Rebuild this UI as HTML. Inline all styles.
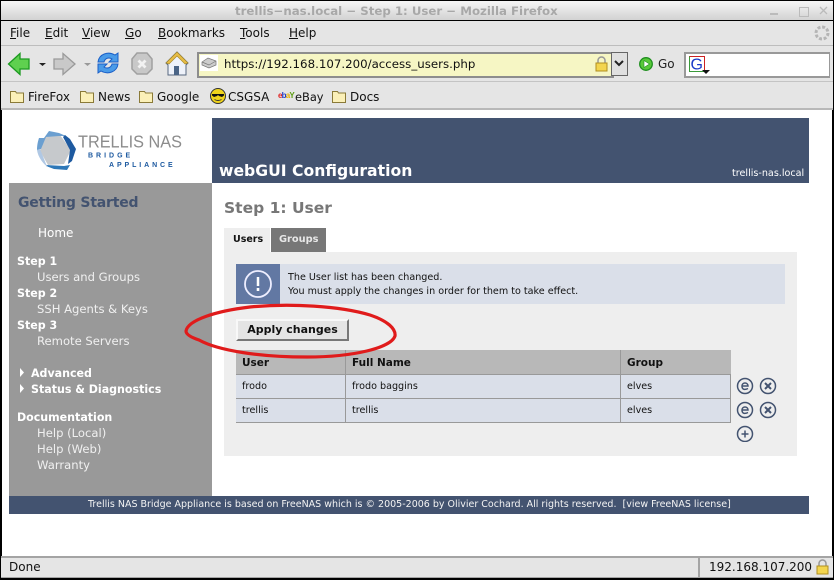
<!DOCTYPE html>
<html><head><meta charset="utf-8"><style>
html,body{margin:0;padding:0;background:#000}
#w{position:relative;width:834px;height:580px;overflow:hidden;background:#e5e5e5;font-family:"DejaVu Sans",sans-serif;color:#000}
.a{position:absolute;white-space:nowrap}
.t{position:absolute;white-space:nowrap;font-size:12px;line-height:16px}
.m{font-size:12px;line-height:16px;color:#111}
.s{color:#fff;font-size:11.600px;line-height:16px;position:absolute;white-space:nowrap}
.b{font-weight:bold}
.s.b{font-size:11.050px;margin-top:1px}
.d{color:#f0f0f0}
u{text-decoration:underline}
.c{font-size:9.600px;line-height:14px;position:absolute;white-space:nowrap;color:#111}
</style></head><body><div id="w">
<!-- window frame -->
<div class="a" style="left:0;top:0;width:834px;height:1px;background:#000"></div>
<div class="a" style="left:1px;top:1px;width:832px;height:19px;background:linear-gradient(#f6f6f6,#d2d2d2)"></div>
<div class="a" style="left:0;top:20px;width:834px;height:1px;background:#000"></div>
<div class="a b" style="left:235px;top:3px;font-size:11.770px;line-height:16px;color:#a8a8a8">trellis−nas.local − Step 1: User − Mozilla Firefox</div>
<svg class="a" style="left:770px;top:3px" width="64" height="16"><path d="M-1 11h9" stroke="#bbb" stroke-width="2"/><rect x="29.500" y="4.500" width="9" height="9" fill="none" stroke="#bbb"/><path d="M50 4l7 7M57 4l-7 7" stroke="#bbb" stroke-width="1.300"/></svg>
<!-- menu -->
<div class="t m" style="left:10px;top:25px"><u>F</u>ile</div>
<div class="t m" style="left:45px;top:25px"><u>E</u>dit</div>
<div class="t m" style="left:82px;top:25px"><u>V</u>iew</div>
<div class="t m" style="left:125px;top:25px"><u>G</u>o</div>
<div class="t m" style="left:158px;top:25px"><u>B</u>ookmarks</div>
<div class="t m" style="left:240px;top:25px"><u>T</u>ools</div>
<div class="t m" style="left:289px;top:25px"><u>H</u>elp</div>
<svg class="a" style="left:813px;top:24px" width="18" height="20"><circle cx="9" cy="9" r="6" fill="none" stroke="#b5b5b5" stroke-width="3" stroke-dasharray="3 1.700"/></svg>
<div class="a" style="left:1px;top:45px;width:832px;height:1px;background:#bdbdbd"></div>
<!-- toolbar -->
<svg class="a" style="left:6px;top:50px" width="190" height="28">
<path d="M2.500 14L14 3.500v5.500h9v10h-9v5.500z" fill="#5fd04f" stroke="#1c9a20" stroke-width="1.300"/>
<path d="M33 13h7l-3.500 3z" fill="#222"/>
<path d="M69 14L57 3.500v5.500h-9v10h9v5.500z" fill="#c9c9c9" stroke="#9a9a9a" stroke-width="1.300"/>
<path d="M78 13h7l-3.500 3z" fill="#999"/>
<path d="M92 12c1-8 10-11 17-7l3-2v9h-9l3-3c-3-2-7-1-8 3zM112 14c-1 8-10 11-17 7l-3 2v-9h9l-3 3c3 2 7 1 8-3z" fill="#4a9be8" stroke="#1a5fc8"/>
<path d="M126 8l5-6h10l5 6v10l-5 5h-10l-5-5z" fill="#c8c8c8" stroke="#a0a0a0" stroke-width="1.500" transform="translate(0 1)"/>
<path d="M132.500 10.500l7 7M139.500 10.500l-7 7" stroke="#f2f2f2" stroke-width="2.800"/>
<path d="M160 13L171 2l11 11-2 2v10h-18V15z" fill="#eef2fa" stroke="#56677f"/>
<path d="M160 13L171 2l11 11-3 1-8-8-8 8z" fill="#e8bd45" stroke="#a88a2a" stroke-width=".7"/>
<rect x="168" y="16" width="5" height="9" fill="#4a6486"/>
</svg>
<div class="a" style="left:197px;top:52px;width:414px;height:22px;background:#f6f6c4;border:1px solid #8d8d8d;border-width:2px 1px 2px 2px"></div>
<svg class="a" style="left:200px;top:55px" width="20" height="18"><rect width="18" height="16" x="0" y="0" fill="#fff"/><path d="M2 7l6-4 8 3v4l-7 3-7-3z" fill="#ccc" stroke="#777" stroke-width=".7"/><path d="M2 7l7 3 7-4" fill="none" stroke="#777" stroke-width=".7"/></svg>
<div class="t" style="left:224px;top:56px;font-size:11.800px;color:#111">https://192.168.107.200/access_users.php</div>
<svg class="a" style="left:594px;top:56px" width="16" height="16"><path d="M4 7V4.500a3.500 3.500 0 017 0V7" fill="none" stroke="#999" stroke-width="1.500"/><rect x="2" y="7" width="11" height="8" fill="#f3d54e" stroke="#b08f20"/></svg>
<div class="a" style="left:611px;top:52px;background:#e0e0e0;border:1px solid #666;width:15px;height:22px"></div>
<svg class="a" style="left:612px;top:59px" width="14" height="10"><path d="M3 2l4 4 4-4" fill="none" stroke="#222" stroke-width="2"/></svg>
<svg class="a" style="left:638px;top:56px" width="16" height="16"><circle cx="8" cy="8" r="6.300" fill="#58c83a" stroke="#1f8f1f" stroke-width="1.300"/><path d="M6 4.500L11.500 8 6 11.500z" fill="#fff" stroke="#1f8f1f" stroke-width=".6"/></svg>
<div class="t" style="left:658px;top:56px;color:#222">Go</div>
<div class="a" style="left:684px;top:52px;height:22px;background:#fff;border:1px solid #999;border-width:2px 1px 2px 2px;width:143px"></div>
<svg class="a" style="left:689px;top:56px" width="24" height="20"><rect x=".5" y=".5" width="15" height="15" fill="#fff" stroke="#3a9a3a"/><path d="M.5 .5h15v15" fill="none" stroke="#cc2222"/><text x="1.500" y="13.500" font-family="Liberation Sans" font-size="16" fill="#1a3ac8">G</text><path d="M13 14h8l-4 4z" fill="#111"/></svg>
<div class="a" style="left:1px;top:81px;width:832px;height:1px;background:#c4c4c4"></div>
<!-- bookmarks -->
<svg class="a" style="left:10px;top:90px" width="340" height="14">
<g fill="#fbf0b8" stroke="#8a7a38"><path d="M.5 3V1.500h5l1 1.500h7v9.500H.5z"/><path d="M70.500 3V1.500h5l1 1.500h7v9.500h-13z"/><path d="M129.500 3V1.500h5l1 1.500h7v9.500h-13z"/><path d="M322.500 3V1.500h5l1 1.500h7v9.500h-13z"/></g></svg>
<div class="t m" style="left:28px;top:89px">FireFox</div>
<div class="t m" style="left:98px;top:89px">News</div>
<div class="t m" style="left:157px;top:89px">Google</div>
<svg class="a" style="left:209px;top:87px" width="18" height="18"><circle cx="9" cy="9" r="7.500" fill="#f0d41c" stroke="#333"/><path d="M3 7h12v1.500l-2 1.500-3-1-1-1-1 1-3 1-2-1.500z" fill="#111"/><path d="M5.500 12.500q3.500 2 7 0" stroke="#333" fill="none"/></svg>
<div class="t m" style="left:228px;top:89px">CSGSA</div>
<div class="a" style="left:278px;top:91px;font:bold 8px/9px 'Liberation Sans',sans-serif;letter-spacing:-.8px"><span style="color:#e02020">e</span><span style="color:#1a3ac8">b</span><span style="color:#e8b000">a</span><span style="color:#5a9a10">Y</span></div>
<div class="t m" style="left:295px;top:89px;font-size:11.400px">eBay</div>
<div class="t m" style="left:350px;top:89px">Docs</div>
<div class="a" style="left:1px;top:108px;width:832px;height:2px;background:#b8b8b8"></div>
<!-- page -->
<div class="a" style="left:1px;top:110px;width:832px;height:446px;background:#fff;border-left:1px solid #000;border-right:1px solid #000;box-sizing:border-box"></div>
<svg class="a" style="left:36px;top:128px" width="150" height="46">
<path d="M9 9l15-2 11 15-7 14-16 1-8-14z" fill="#c6c9cc"/>
<path d="M8 10L13 3l10 2 7 3-7 0-13 1-5 12-4 1c0-5 1-9 2-12z" fill="#6b9fd0"/>
<path d="M29 7l5 4 6 10-4 12-4 3 2-14-7-13z" fill="#1e5aa0"/>
<path d="M10 37l18 1 6-1-3 5-13-1-8-3z" fill="#2e78b8"/>
<path d="M1 22l3-1 6 15 2 3c-5-3-10-10-11-17z" fill="#b0c8e4"/>
<text x="42" y="19.500" font-family="Liberation Sans" font-size="17.500" fill="#8c8c8c" textLength="104" lengthAdjust="spacingAndGlyphs">TRELLIS NAS</text>
<text x="52" y="29.500" font-family="Liberation Sans" font-weight="bold" font-size="7" fill="#1e5aa0" letter-spacing="3">BRIDGE</text>
<text x="73" y="39" font-family="Liberation Sans" font-weight="bold" font-size="7" fill="#1e5aa0" letter-spacing="2.900">APPLIANCE</text>
</svg>
<div class="a" style="left:212px;top:118px;width:597px;height:65px;background:#435370"></div>
<div class="a b" style="left:219px;top:160px;font-size:15.650px;line-height:21px;color:#fff">webGUI Configuration</div>
<div class="a" style="left:732px;top:167px;font-size:9.600px;line-height:14px;color:#fff">trellis-nas.local</div>
<div class="a" style="left:9px;top:183px;width:203px;height:313px;background:#999"></div>
<div class="a b" style="left:18px;top:193px;font-size:14px;line-height:20px;color:#435370;letter-spacing:-.2px">Getting Started</div>
<div class="s" style="left:38px;top:225px;font-size:12px">Home</div>
<div class="s b" style="left:17px;top:253px">Step 1</div>
<div class="s d" style="left:37px;top:269px">Users and Groups</div>
<div class="s b" style="left:17px;top:285px">Step 2</div>
<div class="s d" style="left:37px;top:301px">SSH Agents &amp; Keys</div>
<div class="s b" style="left:17px;top:317px">Step 3</div>
<div class="s d" style="left:37px;top:333px">Remote Servers</div>
<svg class="a" style="left:20px;top:367px" width="6" height="30"><path d="M0 1l4 4.500-4 4.500zM0 17l4 4.500-4 4.500z" fill="#fff"/></svg>
<div class="s b" style="left:31px;top:365px">Advanced</div>
<div class="s b" style="left:31px;top:381px">Status &amp; Diagnostics</div>
<div class="s b" style="left:17px;top:409px">Documentation</div>
<div class="s d" style="left:37px;top:425px">Help (Local)</div>
<div class="s d" style="left:37px;top:441px">Help (Web)</div>
<div class="s d" style="left:37px;top:457px">Warranty</div>
<div class="a b" style="left:224px;top:198px;font-size:15.500px;line-height:21px;color:#777">Step 1: User</div>
<div class="a" style="left:224px;top:252px;width:573px;height:204px;background:#eee"></div>
<div class="a" style="left:224px;top:228px;width:46px;height:24px;background:#eee"></div>
<div class="a b" style="left:233px;top:233px;font-size:9.500px;line-height:14px;color:#111">Users</div>
<div class="a" style="left:271px;top:228px;width:55px;height:24px;background:#777"></div>
<div class="a b" style="left:279px;top:233px;font-size:9.800px;line-height:14px;color:#e8e8e8">Groups</div>
<div class="a" style="left:236px;top:264px;width:549px;height:40px;background:#dadfe9"></div>
<div class="a" style="left:236px;top:264px;width:44px;height:40px;background:#6278a3"></div>
<svg class="a" style="left:243px;top:269px" width="30" height="30"><circle cx="15" cy="15" r="13" fill="none" stroke="#eef" stroke-width="1.800"/><path d="M15 8v9" stroke="#fff" stroke-width="2.500"/><rect x="13.700" y="19" width="2.600" height="3" fill="#fff"/></svg>
<div class="c" style="left:288px;top:271px">The User list has been changed.</div>
<div class="c" style="left:288px;top:285px">You must apply the changes in order for them to take effect.</div>
<div class="a b" style="left:236px;top:319px;width:113px;height:22px;box-sizing:border-box;background:#e4e4e4;border:2px solid;border-color:#f8f8f8 #777 #777 #f8f8f8;text-align:center;font-size:11px;line-height:18px;color:#111">Apply changes</div>
<!-- table -->
<div class="a" style="left:236px;top:350px;width:495px;height:73px;background:#999"></div>
<div class="a" style="left:236px;top:350px;width:109px;height:24px;background:#b8b8b8"></div>
<div class="a" style="left:346px;top:350px;width:274px;height:24px;background:#b8b8b8"></div>
<div class="a" style="left:621px;top:350px;width:110px;height:24px;background:#b8b8b8"></div>
<div class="a" style="left:236px;top:375px;width:109px;height:23px;background:#dadfe9"></div>
<div class="a" style="left:346px;top:375px;width:274px;height:23px;background:#dadfe9"></div>
<div class="a" style="left:621px;top:375px;width:109px;height:23px;background:#dadfe9"></div>
<div class="a" style="left:236px;top:399px;width:109px;height:23px;background:#dadfe9"></div>
<div class="a" style="left:346px;top:399px;width:274px;height:23px;background:#dadfe9"></div>
<div class="a" style="left:621px;top:399px;width:109px;height:23px;background:#dadfe9"></div>
<div class="c b" style="left:242px;top:356px;font-size:10.500px">User</div>
<div class="c b" style="left:352px;top:356px;font-size:10.500px">Full Name</div>
<div class="c b" style="left:627px;top:356px;font-size:10.500px">Group</div>
<div class="c" style="left:242px;top:380px">frodo</div>
<div class="c" style="left:352px;top:380px">frodo baggins</div>
<div class="c" style="left:627px;top:380px">elves</div>
<div class="c" style="left:242px;top:404px">trellis</div>
<div class="c" style="left:352px;top:404px">trellis</div>
<div class="c" style="left:627px;top:404px">elves</div>
<svg class="a" style="left:736px;top:376px" width="44" height="66" fill="none" stroke="#435370">
<g stroke-width="1.500"><circle cx="9" cy="10" r="7.500"/><circle cx="32" cy="10" r="7.500"/><circle cx="9" cy="34" r="7.500"/><circle cx="32" cy="34" r="7.500"/><circle cx="9" cy="58" r="7.500"/>
<path d="M6 10h6c0-4-6-4-6 0s3 4 6 2.500M6 34h6c0-4-6-4-6 0s3 4 6 2.500"/>
<path d="M29 7l6 6M35 7l-6 6M29 31l6 6M35 31l-6 6" stroke-width="2"/>
<path d="M9 54.500v7M5.500 58h7"/></g></svg>
<!-- ellipse -->
<svg class="a" style="left:180px;top:300px" width="224" height="64"><path d="M6 31C8 20 36 11 70 7 110 3 160 6 190 15c18 6 26 14 25 21-4 12-42 21-88 21-46 0-88-6-108-17C10 37 6 34 6 31z" fill="none" stroke="#e01b1b" stroke-width="3.200"/></svg>
<!-- footer -->
<div class="a" style="left:9px;top:496px;width:800px;height:18px;background:#435370"></div>
<div class="a" style="left:88px;top:498px;font-size:9.500px;line-height:14px;color:#f4f4f4">Trellis NAS Bridge Appliance is based on FreeNAS which is © 2005-2006 by Olivier Cochard. All rights reserved.&nbsp; [view FreeNAS license]</div>
<!-- status -->
<div class="a" style="left:0;top:556px;width:834px;height:2px;background:#a4a4a4"></div>
<div class="a" style="left:1px;top:558px;width:832px;height:19px;background:#e5e5e5"></div>
<div class="a" style="left:698px;top:557px;width:2px;height:21px;background:#a4a4a4"></div>
<div class="a" style="left:0;top:577px;width:834px;height:1px;background:#a4a4a4"></div>
<div class="a" style="left:0;top:578px;width:834px;height:2px;background:#000"></div>
<div class="t m" style="left:9px;top:559px">Done</div>
<div class="t m" style="left:709px;top:559px">192.168.107.200</div>
<svg class="a" style="left:815px;top:559px" width="16" height="16"><path d="M4 7V4.500a3.500 3.500 0 017 0V7" fill="none" stroke="#999" stroke-width="1.500"/><rect x="2" y="7" width="11" height="8" fill="#f3d54e" stroke="#b08f20"/></svg>
<div class="a" style="left:0;top:0;width:1px;height:580px;background:#000"></div>
<div class="a" style="left:833px;top:0;width:1px;height:580px;background:#000"></div>
</div></body></html>
